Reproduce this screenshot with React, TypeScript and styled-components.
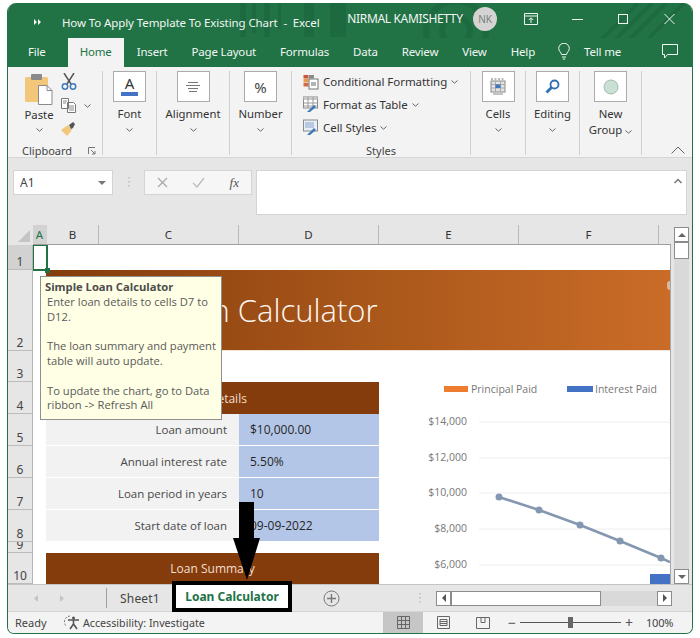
import styled, { createGlobalStyle } from "styled-components";

const GlobalStyle = createGlobalStyle`
  html, body {
    margin: 0;
    background: #ffffff;
    font-family: "Noto Sans", "Open Sans", sans-serif;
  }
  * { box-sizing: border-box; }
`;

const Window = styled.div`
  position: relative;
  width: 686px;
  height: 631px;
  margin: 3px 0 0 7px;
  border: 1px solid #217346;
  border-top: none;
  border-radius: 9px 9px 7px 7px;
  background: #e6e6e6;
  overflow: hidden;
  display: flex;
  flex-direction: column;
`;

/* title bar */
const TitleBar = styled.div`
  position: relative;
  height: 35px;
  flex: none;
  background: #217346;
  color: #f1f6f3;
  display: flex;
  align-items: center;
  font-size: 11.5px;
`;

const TitleArt = styled.svg`
  position: absolute;
  left: 0;
  top: 0;
`;

const QuickAccess = styled.div`
  position: relative;
  width: 54px;
  padding: 3px 0 0 26px;
  display: flex;
`;

const DocTitle = styled.div`
  position: relative;
  width: 286px;
  white-space: pre;
  padding-top: 3px;
  letter-spacing: -0.1px;
`;

const UserName = styled.div`
  position: relative;
  width: 126px;
  margin-top: -5px;
  font-size: 12px;
  letter-spacing: -0.35px;
`;

const Avatar = styled.div`
  position: relative;
  width: 24px;
  height: 24px;
  margin-top: -3px;
  border-radius: 50%;
  background: #d5d3d3;
  color: #77807b;
  font-size: 10px;
  display: flex;
  align-items: center;
  justify-content: center;
`;

const WindowButtons = styled.div`
  position: relative;
  margin-left: 11px;
  margin-top: -3px;
  display: flex;
`;

const WindowButton = styled.div`
  width: 46px;
  display: flex;
  justify-content: center;
`;

/* menu tabs */
const TabBar = styled.div`
  height: 29px;
  flex: none;
  background: #217346;
  display: flex;
  align-items: stretch;
  padding-left: 8px;
  color: #f1f6f3;
  font-size: 11.5px;
  letter-spacing: -0.18px;
`;

const MenuTab = styled.div<{ $active?: boolean }>`
  padding: 0 12px 2px;
  display: flex;
  align-items: center;
  margin-left: ${(p) => (p.$active ? "10px" : "0")};
  margin-right: ${(p) => (p.$active ? "1px" : "0")};
  background: ${(p) => (p.$active ? "#f3f3f3" : "transparent")};
  color: ${(p) => (p.$active ? "#217346" : "inherit")};
`;

const TellMe = styled.div`
  display: flex;
  align-items: center;
  gap: 14px;
  margin-left: 11px;
  padding-bottom: 2px;
`;

const CommentButton = styled.div`
  margin-left: auto;
  margin-right: 14px;
  display: flex;
  align-items: center;
  padding-bottom: 3px;
`;

/* ribbon */
const Ribbon = styled.div`
  height: 91px;
  flex: none;
  background: #f3f3f3;
  border-bottom: 1px solid #d6d6d6;
  padding: 4px 0 2px;
  display: flex;
  font-size: 11.3px;
  color: #333333;
`;

const Group = styled.div<{ $w: number }>`
  position: relative;
  width: ${(p) => p.$w}px;
  flex: none;
  border-right: 1px solid #cfcfcf;
  display: flex;
  flex-direction: column;
  align-items: center;
`;

const BigButton = styled.div`
  width: 33px;
  height: 31px;
  background: #ffffff;
  border: 1px solid #ababab;
  font-size: 15px;
  color: #444444;
  display: flex;
  align-items: center;
  justify-content: center;
  flex: none;
`;

const BigLabel = styled.div`
  margin-top: 4px;
  line-height: 16px;
  text-align: center;
  white-space: nowrap;
`;

const Caret = styled.svg`
  display: inline-block;
  flex: none;
`;

const CaretRow = styled.div`
  height: 12px;
  margin-top: 2px;
  display: flex;
  align-items: center;
`;

const GroupLabel = styled.div`
  margin-top: auto;
  margin-bottom: -4px;
  line-height: 16px;
  font-size: 11px;
  color: #444444;
`;

const ClipboardBody = styled.div`
  width: 100%;
  display: flex;
  padding-left: 17px;
  height: 68px;
`;

const PasteColumn = styled.div`
  width: 28px;
  padding-top: 3px;
  display: flex;
  flex-direction: column;
  align-items: center;
`;

const PasteLabel = styled.div`
  margin-top: 2px;
  line-height: 15px;
`;

const ClipboardTools = styled.div`
  margin-left: 8px;
  display: flex;
  flex-direction: column;
  gap: 8px;
  padding-top: 2px;
`;

const ToolRow = styled.div`
  display: flex;
  align-items: center;
  gap: 7px;
`;

const ClipboardFooter = styled.div`
  position: relative;
  width: 100%;
  margin-top: auto;
  margin-bottom: -4px;
  padding-left: 14px;
  line-height: 16px;
  font-size: 11px;
  color: #444444;
`;

const Launcher = styled.svg`
  position: absolute;
  right: 6px;
  top: 4px;
`;

const StyleList = styled.div`
  width: 100%;
  padding: 1px 0 0 11px;
  display: flex;
  flex-direction: column;
  gap: 4px;
`;

const StyleItem = styled.div`
  display: flex;
  align-items: center;
  gap: 4px;
  height: 19px;
  white-space: nowrap;
  font-size: 11.5px;
  letter-spacing: -0.05px;
`;

const Collapse = styled.div`
  flex: 1;
  display: flex;
  align-items: flex-end;
  justify-content: flex-end;
  padding: 0 7px 1px 0;
`;

/* formula bar */
const FormulaBar = styled.div`
  height: 67px;
  flex: none;
  background: #e6e6e6;
  padding: 12px 5px 0 5px;
  display: flex;
  align-items: flex-start;
`;

const NameBox = styled.div`
  width: 100px;
  height: 25px;
  background: #ffffff;
  border: 1px solid #d4d4d4;
  display: flex;
  align-items: center;
  justify-content: space-between;
  padding: 0 6px;
  font-size: 12px;
  color: #444444;
`;

const DownTriangle = styled.span`
  width: 0;
  height: 0;
  border-left: 4px solid transparent;
  border-right: 4px solid transparent;
  border-top: 4px solid #777777;
`;

const GripDots = styled.div`
  width: 31px;
  height: 25px;
  display: flex;
  align-items: center;
  justify-content: center;
`;

const FormulaTools = styled.div`
  width: 108px;
  height: 25px;
  background: #f6f6f6;
  border: 1px solid #d4d4d4;
  display: flex;
  align-items: center;
  justify-content: space-between;
  padding: 0 12px;
`;

const FxMark = styled.span`
  font-family: "Liberation Serif", serif;
  font-style: italic;
  font-size: 13px;
  color: #555555;
`;

const FormulaInput = styled.div`
  width: 431px;
  height: 45px;
  margin-left: 4px;
  background: #ffffff;
  border: 1px solid #d4d4d4;
  display: flex;
  justify-content: flex-end;
  padding: 7px 4px 0 0;
`;

/* column headers */
const ColumnHeaders = styled.div`
  height: 20px;
  flex: none;
  display: flex;
  background: #e6e6e6;
  font-size: 11.5px;
  color: #333333;
`;

const Corner = styled.div`
  width: 25px;
  display: flex;
  align-items: flex-end;
  justify-content: flex-end;
  padding: 0 3px 3px 0;
`;

const ColumnHead = styled.div<{ $w: number; $current?: boolean }>`
  width: ${(p) => p.$w}px;
  flex: none;
  display: flex;
  align-items: center;
  justify-content: center;
  background: ${(p) => (p.$current ? "#d2d2d2" : "transparent")};
  color: ${(p) => (p.$current ? "#217346" : "inherit")};
  border-right: 1px solid ${(p) => (p.$current ? "transparent" : "#b9b9b9")};
  border-bottom: 1px solid #9d9d9d;
`;

const HeaderFill = styled.div`
  width: 12px;
  border-bottom: 1px solid #9d9d9d;
`;

/* sheet */
const SheetArea = styled.div`
  height: 339px;
  flex: none;
  display: flex;
`;

const RowHeaders = styled.div`
  width: 25px;
  flex: none;
  display: flex;
  flex-direction: column;
  background: #e6e6e6;
  border-right: 1px solid #b5b5b5;
  font-size: 12px;
  color: #444444;
`;

const RowHead = styled.div<{ $h: number; $current?: boolean }>`
  height: ${(p) => p.$h}px;
  flex: none;
  overflow: hidden;
  display: flex;
  align-items: flex-end;
  justify-content: center;
  line-height: 15px;
  background: ${(p) => (p.$current ? "#d2d2d2" : "transparent")};
  border-bottom: 1px solid #bcbcbc;
`;

const Sheet = styled.div`
  position: relative;
  width: 638px;
  flex: none;
  background: #ffffff;
  border-right: 1px solid #a8a8a8;
  display: grid;
  grid-template-columns: 13px 193px 140px 291px;
  grid-template-rows: 25px 81px 31px 32px 32px 32px 32px 32px 11px 31px;
  overflow: hidden;
  font-family: "Open Sans", sans-serif;
  font-size: 11.5px;
`;

const Banner = styled.div`
  position: relative;
  grid-column: 2 / -1;
  grid-row: 2;
  background: linear-gradient(90deg, #843c0c 0%, #a8561a 50%, #ca6c28 100%);
  color: #fdf7f2;
  font-size: 31px;
  font-weight: 300;
  line-height: 81px;
  padding-left: 115px;
  white-space: nowrap;
  border-bottom: 1px solid #f0e4da;
`;

const BannerDot = styled.span`
  position: absolute;
  right: 0;
  top: 11px;
  width: 3px;
  height: 9px;
  border-radius: 5px 0 0 5px;
  background: #d9b89f;
`;

const SectionBar = styled.div<{ $row: number }>`
  grid-column: 2 / 4;
  grid-row: ${(p) => p.$row};
  background: #843c0c;
  color: #f3dfcf;
  font-size: 12px;
  display: flex;
  align-items: center;
  justify-content: center;
`;

const InfoLabel = styled.div<{ $row: number }>`
  grid-column: 2;
  grid-row: ${(p) => p.$row};
  background: #f2f2f2;
  color: #484848;
  border-bottom: 1px solid #ffffff;
  display: flex;
  align-items: center;
  justify-content: flex-end;
  padding-right: 12px;
`;

const InfoValue = styled.div<{ $row: number }>`
  grid-column: 3;
  grid-row: ${(p) => p.$row};
  background: #b4c6e7;
  color: #262626;
  font-size: 12px;
  border-bottom: 1px solid #ffffff;
  display: flex;
  align-items: center;
  padding-left: 11px;
`;

const ChartFrame = styled.svg`
  grid-column: 4;
  grid-row: 3 / -1;
  display: block;
`;

const Selection = styled.div`
  position: absolute;
  left: -1px;
  top: -1px;
  width: 16px;
  height: 27px;
  border: 2px solid #217346;
`;

const SelectionHandle = styled.span`
  position: absolute;
  right: -4px;
  bottom: -4px;
  width: 5px;
  height: 5px;
  background: #217346;
`;

const Tooltip = styled.div`
  position: absolute;
  left: 7px;
  top: 31px;
  width: 182px;
  height: 144px;
  padding: 3px 4px 0 4px;
  background: #ffffe5;
  border: 1px solid #8f8f8f;
  font-family: "Open Sans", sans-serif;
  font-size: 11.2px;
  line-height: 14.8px;
  color: #5a5a5a;
  z-index: 2;
`;

const TooltipTitle = styled.div`
  font-weight: 700;
  color: #4c4c4c;
`;

const TooltipBody = styled.div`
  padding-left: 2px;
  white-space: pre;
`;

const VScroll = styled.div`
  flex: 1;
  padding: 0 3px;
  margin-top: -18px;
  display: flex;
  flex-direction: column;
  position: relative;
`;

const VTrack = styled.div`
  flex: 1;
  background: #d9d9d9;
  display: flex;
  flex-direction: column;
`;

const ScrollButton = styled.div`
  width: 15px;
  height: 15px;
  flex: none;
  background: #ffffff;
  border: 1px solid #8c8c8c;
  display: flex;
  align-items: center;
  justify-content: center;
`;

const VThumb = styled.div`
  width: 15px;
  height: 17px;
  background: #ffffff;
  border: 1px solid #8c8c8c;
`;

/* sheet tabs */
const SheetTabs = styled.div`
  height: 27px;
  flex: none;
  background: #e6e6e6;
  border-top: 1px solid #c4c4c4;
  display: flex;
  align-items: center;
  position: relative;
  font-size: 12px;
  color: #444444;
`;

const NavArrows = styled.div`
  width: 99px;
  padding-left: 26px;
  display: flex;
  gap: 22px;
  align-items: center;
  border-right: 1px solid #9f9f9f;
  height: 20px;
`;

const SheetTab = styled.div`
  width: 65px;
  padding-left: 13px;
  letter-spacing: 0.2px;
`;

const ActiveTab = styled.div`
  width: 120px;
  height: 31px;
  margin-top: -3px;
  border: 4px solid #000000;
  background: #ffffff;
  color: #217346;
  font-weight: 700;
  display: flex;
  align-items: center;
  justify-content: center;
  z-index: 3;
  flex: none;
`;

const AddSheet = styled.div`
  margin-left: 31px;
  width: 18px;
  display: flex;
`;

const TabGrip = styled.div`
  margin-left: 78px;
  width: 17px;
  display: flex;
`;

const HScroll = styled.div`
  width: 236px;
  height: 15px;
  background: #d9d9d9;
  display: flex;
`;

const HThumb = styled.div`
  width: 150px;
  background: #ffffff;
  border: 1px solid #8c8c8c;
`;

const HSpacer = styled.div`
  flex: 1;
`;

/* status bar */
const StatusBar = styled.div`
  flex: 1;
  background: #f3f3f3;
  border-top: 1px solid #d4d4d4;
  display: flex;
  align-items: center;
  font-size: 11px;
  color: #444444;
`;

const Ready = styled.div`
  width: 56px;
  padding-left: 7px;
`;

const Accessibility = styled.div`
  width: 319px;
  display: flex;
  align-items: center;
  gap: 1px;
  font-size: 10.7px;
`;

const ViewButton = styled.div<{ $active?: boolean }>`
  width: 40px;
  height: 100%;
  display: flex;
  align-items: center;
  justify-content: center;
  background: ${(p) => (p.$active ? "#c6c6c6" : "transparent")};
`;

const ZoomSlider = styled.div`
  margin-left: 5px;
  width: 125px;
  display: flex;
  align-items: center;
  gap: 4px;
  color: #555555;
  font-size: 14px;
`;

const SliderTrack = styled.div`
  position: relative;
  flex: 1;
  height: 1px;
  background: #555555;
`;

const SliderThumb = styled.span`
  position: absolute;
  left: 48px;
  top: -5px;
  width: 5px;
  height: 11px;
  background: #666666;
`;

const ZoomValue = styled.div`
  margin-left: 13px;
  letter-spacing: -0.2px;
`;

const PointerArrow = styled.svg`
  position: absolute;
  left: 224px;
  top: 496px;
  z-index: 4;
`;

const tabs = ["Insert", "Page Layout", "Formulas", "Data", "Review", "View", "Help"];
const rows: [string, number][] = [
  ["1", 25], ["2", 81], ["3", 31], ["4", 32], ["5", 32],
  ["6", 32], ["7", 32], ["8", 32], ["9", 11], ["10", 31],
];
const columns: [string, number][] = [
  ["B", 52], ["C", 140], ["D", 140], ["E", 140], ["F", 140],
];
const loanRows = [
  ["Loan amount", "$10,000.00"],
  ["Annual interest rate", "5.50%"],
  ["Loan period in years", "10"],
  ["Start date of loan", "09-09-2022"],
];
const ticks: [string, number][] = [
  ["$14,000", 422], ["$12,000", 458], ["$10,000", 493], ["$8,000", 529], ["$6,000", 565],
];
const linePoints: [number, number][] = [
  [500, 497], [540, 510], [581, 525], [621, 541], [662, 558],
];

function Chevron() {
  return (
    <Caret width="7" height="4" viewBox="0 0 7 4">
      <path d="M0.5 0.5 3.5 3.2 6.5 0.5" fill="none" stroke="#666" />
    </Caret>
  );
}

function ConditionalIcon() {
  return (
    <svg width="16" height="16" viewBox="0 0 16 16">
      <rect x="0.5" y="1" width="5" height="3.5" fill="#c8553d" />
      <rect x="6" y="1" width="5" height="3.5" fill="#8a8a8a" />
      <rect x="0.5" y="5" width="5" height="3.5" fill="#e69a4a" />
      <rect x="0.5" y="9" width="5" height="3.5" fill="#d06a4c" />
      <rect x="6" y="5" width="9" height="10" fill="#fff" stroke="#777" />
      <path d="M8 11h5M8 9h5" stroke="#666" />
    </svg>
  );
}

function TableIcon() {
  return (
    <svg width="16" height="17" viewBox="0 0 16 17">
      <rect x="0.5" y="1" width="14" height="11" fill="#fff" stroke="#8a8a8a" />
      <rect x="0.5" y="1" width="14" height="3" fill="#c9c9c9" />
      <path d="M5 1v11M10 1v11M1 7h13M1 10h13" stroke="#9b9b9b" />
      <path d="M5 15 11 9l2 2-6 5H4z" fill="#3f78b8" />
    </svg>
  );
}

function CellStyleIcon() {
  return (
    <svg width="16" height="17" viewBox="0 0 16 17">
      <rect x="0.5" y="1" width="14" height="11" fill="#e9eff7" stroke="#8a8a8a" />
      <rect x="2" y="3" width="9" height="6" fill="#b8c8de" />
      <path d="M5 15 11 9l2 2-6 5H4z" fill="#3f78b8" />
    </svg>
  );
}

export default function App() {
  return (
    <>
      <GlobalStyle />
      <Window>
        <TitleBar>
          <TitleArt width="686" height="35" viewBox="0 0 686 35">
            <g fill="#1e6a40">
              <rect x="232" y="0" width="6" height="34" />
              <rect x="244" y="0" width="4" height="30" />
              <rect x="256" y="0" width="6" height="34" />
              <rect x="270" y="0" width="3" height="26" />
              <rect x="296" y="0" width="10" height="34" />
              <rect x="322" y="0" width="16" height="34" />
            </g>
            <g fill="none" stroke="#1e6a40">
              <circle cx="448" cy="28" r="14" strokeWidth="6" />
              <circle cx="448" cy="28" r="30" strokeWidth="6" />
              <path d="M590 40 630 0M604 40 644 0M618 40 658 0M636 40 676 0" strokeWidth="4" />
            </g>
          </TitleArt>
          <QuickAccess>
            <svg width="8" height="6" viewBox="0 0 8 6">
              <path d="M0 0 3 3 0 6zM4 0l3 3-3 3z" fill="#f1f6f3" />
            </svg>
          </QuickAccess>
          <DocTitle>{"How To Apply Template To Existing Chart  -  Excel"}</DocTitle>
          <UserName>NIRMAL KAMISHETTY</UserName>
          <Avatar>NK</Avatar>
          <WindowButtons>
            <WindowButton>
              <svg width="14" height="12" viewBox="0 0 14 12">
                <path d="M0.5 0.5h13v11h-13zM0.5 3h13M7 10V5M4.8 7 7 4.8 9.2 7" fill="none" stroke="#f1f6f3" />
              </svg>
            </WindowButton>
            <WindowButton>
              <svg width="11" height="12" viewBox="0 0 11 12">
                <path d="M0 6.5h11" stroke="#f1f6f3" />
              </svg>
            </WindowButton>
            <WindowButton>
              <svg width="10" height="12" viewBox="0 0 10 12">
                <rect x="0.5" y="1.5" width="9" height="9" fill="none" stroke="#f1f6f3" />
              </svg>
            </WindowButton>
            <WindowButton>
              <svg width="11" height="12" viewBox="0 0 11 12">
                <path d="M0.5 1 10.5 11M10.5 1 0.5 11" stroke="#f1f6f3" />
              </svg>
            </WindowButton>
          </WindowButtons>
        </TitleBar>
        <TabBar>
          <MenuTab>File</MenuTab>
          <MenuTab $active>Home</MenuTab>
          {tabs.map((tab) => (
            <MenuTab key={tab}>{tab}</MenuTab>
          ))}
          <TellMe>
            <svg width="12" height="17" viewBox="0 0 12 17">
              <path
                d="M3.5 11.5C3 9 .7 8 .7 5.5a5.3 5.3 0 0 1 10.6 0c0 2.5-2.3 3.5-2.8 6zM4 14h4M4.8 16h2.4"
                fill="none"
                stroke="#f1f6f3"
              />
            </svg>
            Tell me
          </TellMe>
          <CommentButton>
            <svg width="16" height="15" viewBox="0 0 16 15">
              <path d="M.5.5h15v10H5.5L2.5 14v-3.5H.5z" fill="none" stroke="#f1f6f3" />
            </svg>
          </CommentButton>
        </TabBar>

        <Ribbon>
          <Group $w={95}>
            <ClipboardBody>
              <PasteColumn>
                <svg width="28" height="31" viewBox="0 0 28 31">
                  <rect x="0" y="3" width="23" height="25" rx="1.5" fill="#f2c77a" />
                  <rect x="6" y="0" width="11" height="6" rx="1" fill="#8a8a8a" />
                  <path d="M13.5 11.5H22l5 5V30.5H13.5z" fill="#fff" stroke="#8a8a8a" />
                  <path d="M22 11.5v5h5" fill="none" stroke="#8a8a8a" />
                </svg>
                <PasteLabel>Paste</PasteLabel>
                <CaretRow>
                  <Chevron />
                </CaretRow>
              </PasteColumn>
              <ClipboardTools>
                <svg width="16" height="17" viewBox="0 0 16 17">
                  <path d="M3 0l7 11M13 0 6 11" stroke="#555" strokeWidth="1.5" />
                  <circle cx="4" cy="13.5" r="2.7" fill="none" stroke="#3f78b8" strokeWidth="1.5" />
                  <circle cx="12" cy="13.5" r="2.7" fill="none" stroke="#3f78b8" strokeWidth="1.5" />
                </svg>
                <ToolRow>
                  <svg width="16" height="15" viewBox="0 0 16 15">
                    <path d="M.5.5h7v10h-7zM6.5 4.5h6l2 2v8h-8z" fill="#fff" stroke="#777" />
                    <path d="M2 3h4M2 5h3M8 8h5M8 10h5M8 12h5" stroke="#888" />
                  </svg>
                  <Chevron />
                </ToolRow>
                <svg width="17" height="15" viewBox="0 0 17 15">
                  <path d="M0 9 7 4l4 5-5 6z" fill="#f2c77a" />
                  <path d="M8 4l4-3 2 2-2 4-2 1z" fill="#555" />
                </svg>
              </ClipboardTools>
            </ClipboardBody>
            <ClipboardFooter>
              Clipboard
              <Launcher width="8" height="8" viewBox="0 0 8 8">
                <path d="M.5 7V.5H7M3 3l4 4M7 4v3H4" fill="none" stroke="#777" />
              </Launcher>
            </ClipboardFooter>
          </Group>
          <Group $w={54}>
            <BigButton>
              <svg width="17" height="21" viewBox="0 0 17 21">
                <text x="8.5" y="13" fontSize="15" textAnchor="middle" fill="#333" fontFamily="Noto Sans">
                  A
                </text>
                <rect x="0" y="16" width="17" height="4" fill="#4472c4" />
              </svg>
            </BigButton>
            <BigLabel>Font</BigLabel>
            <CaretRow>
              <Chevron />
            </CaretRow>
          </Group>
          <Group $w={73}>
            <BigButton>
              <svg width="14" height="10" viewBox="0 0 14 10">
                <path d="M2 .5h10M0 3.5h14M2 6.5h10M3 9.5h8" stroke="#777" />
              </svg>
            </BigButton>
            <BigLabel>Alignment</BigLabel>
            <CaretRow>
              <Chevron />
            </CaretRow>
          </Group>
          <Group $w={62}>
            <BigButton>%</BigButton>
            <BigLabel>Number</BigLabel>
            <CaretRow>
              <Chevron />
            </CaretRow>
          </Group>
          <Group $w={179}>
            <StyleList>
              <StyleItem>
                <ConditionalIcon />
                Conditional Formatting
                <Chevron />
              </StyleItem>
              <StyleItem>
                <TableIcon />
                Format as Table
                <Chevron />
              </StyleItem>
              <StyleItem>
                <CellStyleIcon />
                Cell Styles
                <Chevron />
              </StyleItem>
            </StyleList>
            <GroupLabel>Styles</GroupLabel>
          </Group>
          <Group $w={55}>
            <BigButton>
              <svg width="16" height="18" viewBox="0 0 16 18">
                <path d="M1 1h14" stroke="#777" strokeDasharray="2 1.5" />
                <rect x="1" y="3" width="14" height="11" fill="#e3e3e3" stroke="#888" />
                <path d="M5.5 3v11M10.5 3v11M1 6.5h14M1 10h14" stroke="#aaa" />
                <rect x="5.5" y="6.5" width="5" height="3.5" fill="#3f78b8" />
                <path d="M3 16h10" stroke="#888" />
              </svg>
            </BigButton>
            <BigLabel>Cells</BigLabel>
            <CaretRow>
              <Chevron />
            </CaretRow>
          </Group>
          <Group $w={54}>
            <BigButton>
              <svg width="15" height="15" viewBox="0 0 15 15">
                <circle cx="9.5" cy="5.5" r="4" fill="none" stroke="#2f6fb5" strokeWidth="1.8" />
                <path d="M6.5 8.5 1.5 13.5" stroke="#2f6fb5" strokeWidth="2.8" />
              </svg>
            </BigButton>
            <BigLabel>Editing</BigLabel>
            <CaretRow>
              <Chevron />
            </CaretRow>
          </Group>
          <Group $w={62}>
            <BigButton>
              <svg width="16" height="16" viewBox="0 0 16 16">
                <circle cx="8" cy="8" r="7" fill="#c9e0d5" stroke="#a5b8ae" />
              </svg>
            </BigButton>
            <BigLabel>
              New
              <br />
              Group <Chevron />
            </BigLabel>
          </Group>
          <Collapse>
            <svg width="14" height="8" viewBox="0 0 14 8">
              <path d="M.5 7.5 7 1l6.5 6.5" fill="none" stroke="#666" />
            </svg>
          </Collapse>
        </Ribbon>

        <FormulaBar>
          <NameBox>
            A1
            <DownTriangle />
          </NameBox>
          <GripDots>
            <svg width="2" height="11" viewBox="0 0 2 11">
              <path d="M1 0v11" stroke="#aaa" strokeDasharray="1.5 2.5" />
            </svg>
          </GripDots>
          <FormulaTools>
            <svg width="11" height="11" viewBox="0 0 11 11">
              <path d="M1 1 10 10M10 1 1 10" stroke="#aaa" strokeWidth="1.3" />
            </svg>
            <svg width="13" height="11" viewBox="0 0 13 11">
              <path d="M1 6 5 10 12 1" fill="none" stroke="#bbb" strokeWidth="1.3" />
            </svg>
            <FxMark>fx</FxMark>
          </FormulaTools>
          <FormulaInput>
            <svg width="8" height="6" viewBox="0 0 8 6">
              <path d="M.5 5 4 1.5 7.5 5" fill="none" stroke="#777" strokeWidth="1.5" />
            </svg>
          </FormulaInput>
        </FormulaBar>

        <ColumnHeaders>
          <Corner>
            <svg width="12" height="12" viewBox="0 0 12 12">
              <path d="M12 0v12H0z" fill="#c4c4c4" />
            </svg>
          </Corner>
          <ColumnHead $w={14} $current>
            A
          </ColumnHead>
          {columns.map(([name, width]) => (
            <ColumnHead key={name} $w={width}>
              {name}
            </ColumnHead>
          ))}
          <HeaderFill />
        </ColumnHeaders>

        <SheetArea>
          <RowHeaders>
            {rows.map(([name, height]) => (
              <RowHead key={name} $h={height} $current={name === "1"}>
                {name}
              </RowHead>
            ))}
          </RowHeaders>
          <Sheet>
            <Banner>
              Loan Calculator
              <BannerDot />
            </Banner>
            <SectionBar $row={4}>Loan Details</SectionBar>
            {loanRows.map(([label], i) => (
              <InfoLabel key={label} $row={5 + i}>
                {label}
              </InfoLabel>
            ))}
            {loanRows.map(([label, value], i) => (
              <InfoValue key={label} $row={5 + i}>
                {value}
              </InfoValue>
            ))}
            <SectionBar $row={10}>Loan Summary</SectionBar>
            <ChartFrame width="291" height="233" viewBox="380 351 291 233">
              <rect x="445" y="386" width="24" height="6" fill="#ed7d31" />
              <text x="472" y="393" fontSize="10.5" fill="#777" fontFamily="Open Sans">
                Principal Paid
              </text>
              <rect x="568" y="386" width="26" height="6" fill="#4472c4" />
              <text x="596" y="393" fontSize="10.5" fill="#777" fontFamily="Open Sans">
                Interest Paid
              </text>
              {ticks.map(([label, y]) => (
                <g key={label}>
                  <path d={`M480 ${y}H671`} stroke="#eeeeee" />
                  <text x="468" y={y + 3} fontSize="10.5" fill="#777" textAnchor="end" fontFamily="Open Sans">
                    {label}
                  </text>
                </g>
              ))}
              <polyline
                points={`${linePoints.map((p) => p.join(",")).join(" ")} 671,562`}
                fill="none"
                stroke="#8497b0"
                strokeWidth="2.5"
              />
              {linePoints.map(([x, y]) => (
                <circle key={x} cx={x} cy={y} r="3.5" fill="#8497b0" />
              ))}
              <rect x="651" y="574" width="20" height="10" fill="#4472c4" />
            </ChartFrame>
            <Selection>
              <SelectionHandle />
            </Selection>
            <Tooltip>
              <TooltipTitle>Simple Loan Calculator</TooltipTitle>
              <TooltipBody>
                {"Enter loan details to cells D7 to\nD12.\n\nThe loan summary and payment\ntable will auto update.\n\nTo update the chart, go to Data\nribbon -> Refresh All"}
              </TooltipBody>
            </Tooltip>
          </Sheet>
          <VScroll>
            <ScrollButton>
              <svg width="8" height="4" viewBox="0 0 8 4">
                <path d="M4 0l4 4H0z" fill="#666" />
              </svg>
            </ScrollButton>
            <VTrack>
              <VThumb />
            </VTrack>
            <ScrollButton>
              <svg width="8" height="4" viewBox="0 0 8 4">
                <path d="M0 0h8L4 4z" fill="#666" />
              </svg>
            </ScrollButton>
          </VScroll>
        </SheetArea>

        <SheetTabs>
          <NavArrows>
            <svg width="4" height="7" viewBox="0 0 4 7">
              <path d="M4 0v7L0 3.5z" fill="#c4c4c4" />
            </svg>
            <svg width="4" height="7" viewBox="0 0 4 7">
              <path d="M0 0v7l4-3.5z" fill="#c4c4c4" />
            </svg>
          </NavArrows>
          <SheetTab>Sheet1</SheetTab>
          <ActiveTab>Loan Calculator</ActiveTab>
          <AddSheet>
            <svg width="17" height="17" viewBox="0 0 17 17">
              <circle cx="8.5" cy="8.5" r="7.5" fill="none" stroke="#777" />
              <path d="M4 8.5h9M8.5 4v9" stroke="#777" strokeWidth="1.4" />
            </svg>
          </AddSheet>
          <TabGrip>
            <svg width="2" height="11" viewBox="0 0 2 11">
              <path d="M1 0v11" stroke="#aaa" strokeDasharray="1.5 2.5" />
            </svg>
          </TabGrip>
          <HScroll>
            <ScrollButton>
              <svg width="4" height="8" viewBox="0 0 4 8">
                <path d="M4 0v8L0 4z" fill="#555" />
              </svg>
            </ScrollButton>
            <HThumb />
            <HSpacer />
            <ScrollButton>
              <svg width="4" height="8" viewBox="0 0 4 8">
                <path d="M0 0v8l4-4z" fill="#555" />
              </svg>
            </ScrollButton>
          </HScroll>
        </SheetTabs>

        <StatusBar>
          <Ready>Ready</Ready>
          <Accessibility>
            <svg width="18" height="15" viewBox="0 0 18 15">
              <path d="M6 1a6 6 0 0 0-4 10" fill="none" stroke="#777" strokeDasharray="2 1.5" />
              <circle cx="9.5" cy="3" r="1.5" fill="#555" />
              <path d="M4 5h11M9.5 5v4M9.5 9 6 14M9.5 9 13 14" stroke="#555" strokeWidth="1.6" fill="none" />
            </svg>
            Accessibility: Investigate
          </Accessibility>
          <ViewButton $active>
            <svg width="13" height="13" viewBox="0 0 13 13">
              <path d="M.5.5h12v12H.5zM4.5.5v12M8.5.5v12M.5 4.5h12M.5 8.500h12" fill="none" stroke="#666" />
            </svg>
          </ViewButton>
          <ViewButton>
            <svg width="13" height="13" viewBox="0 0 13 13">
              <path d="M.5.5h12v12H.5z" fill="none" stroke="#666" />
              <path d="M3 3.5h7v6H3zM3 5.5h7M3 7.5h7" fill="none" stroke="#666" />
            </svg>
          </ViewButton>
          <ViewButton>
            <svg width="14" height="12" viewBox="0 0 14 12">
              <path d="M.5.5h13v11H.5zM5 .5v5h4v-5" fill="none" stroke="#666" />
            </svg>
          </ViewButton>
          <ZoomSlider>
            −
            <SliderTrack>
              <SliderThumb />
            </SliderTrack>
            +
          </ZoomSlider>
          <ZoomValue>100%</ZoomValue>
        </StatusBar>

        <PointerArrow width="30" height="84" viewBox="0 0 30 84">
          <path d="M7 3H22V39H28L15 81 1 39H7z" fill="#000000" />
        </PointerArrow>
      </Window>
    </>
  );
}
